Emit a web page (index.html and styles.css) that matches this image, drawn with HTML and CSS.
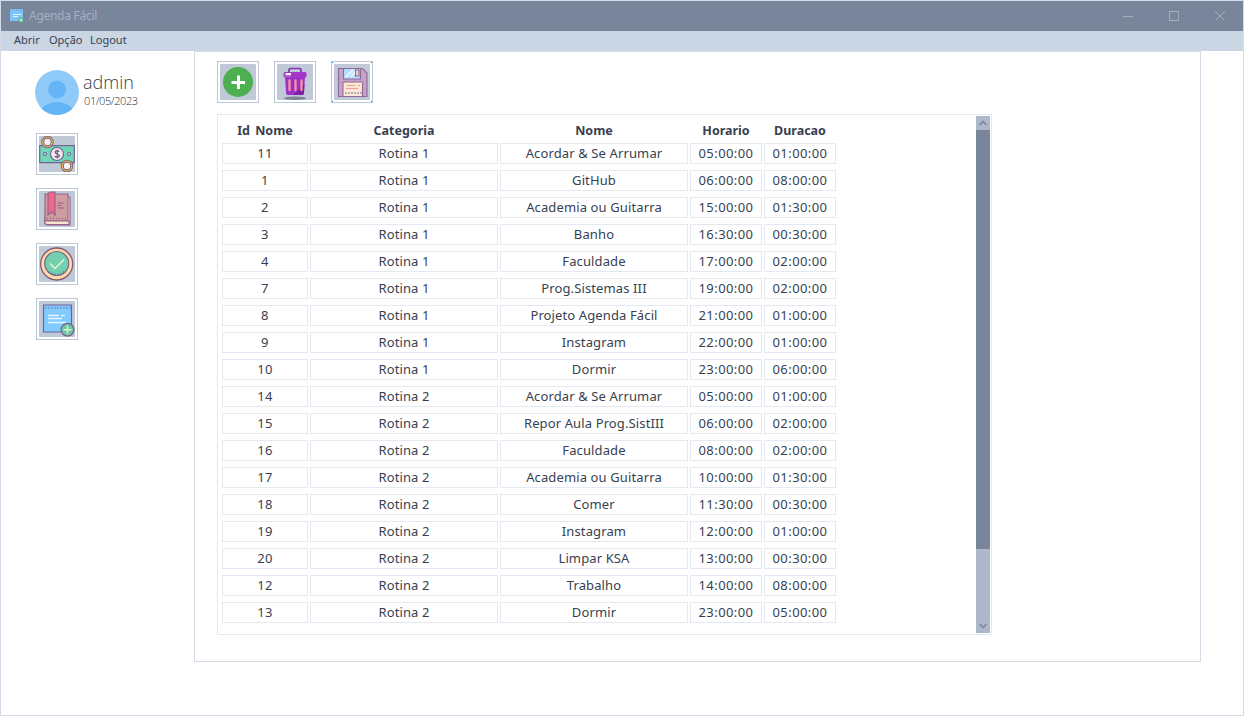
FILE: index.html
```html
<!DOCTYPE html>
<html lang="pt-BR">
<head>
<meta charset="utf-8">
<title>Agenda Fácil</title>
<link rel="stylesheet" href="styles.css">
</head>
<body>
<div class="window">
  <header class="titlebar">
    <svg class="app-icon" width="14" height="14" viewBox="0 0 14 14"><path fill="#7cc4fa" d="M0 0h13v12H0z"/><path stroke="#659fd3" d="M0 1h13" stroke-dasharray="1 1"/><path stroke="#e5f3ff" d="M3 5.5h8M3 7.5h5"/><circle cx="11" cy="11" r="2.8" fill="#5bb79c"/><path stroke="#d9f5e5" d="M9.5 11h3M11 9.500v3"/></svg>
    <span class="title">Agenda Fácil</span>
    <svg class="controls" width="104" height="12" viewBox="0 0 104 12" fill="none" stroke="#a3adc0"><path d="M0 6.500h10M46.500 1.500h9v9h-9z"/><path d="M92.500 1.500l9 9m0-9l-9 9"/></svg>
  </header>
  <nav class="menubar"><span class="m-open">Abrir</span><span class="m-option">Opção</span><span class="m-logout">Logout</span></nav>
  <div class="body">
    <aside class="sidebar">
      <div class="user">
        <svg width="44" height="46" viewBox="0 0 44 46"><defs><clipPath id="face"><ellipse cx="22" cy="22.500" rx="22" ry="22.500"/></clipPath></defs><g clip-path="url(#face)"><path fill="#90caf9" d="M0 0h44v46H0z"/><circle cx="22" cy="19.500" r="9" fill="#64b5f6"/><ellipse cx="22" cy="44" rx="17" ry="12" fill="#64b5f6"/></g></svg>
        <div class="user-text"><div class="name">admin</div><div class="date">01/05/2023</div></div>
      </div>
      <div class="side-buttons">
        <button class="tool"><svg viewBox="0 0 36 36"><g stroke="#6f6494" stroke-width="1.200"><path fill="#70d6b8" d="M.7 9.700h34.600v17H.7z"/><circle cx="18" cy="18" r="6.500" fill="#f7e9eb"/><circle cx="6" cy="18" r="1.500" fill="#d5eef2"/><circle cx="30" cy="18" r="1.500" fill="#d5eef2"/></g><path fill="none" stroke="#67598c" stroke-width="1.200" d="M20.500 15.700c-1-1.300-4.500-1.200-4.500.6 0 2 4.500 1.300 4.500 3.400 0 1.900-3.700 1.900-4.800.5M18.200 13.500v9"/><g fill="#f5f3f9" stroke="#6f5f80" stroke-width="3"><circle cx="8.500" cy="6" r="4.700"/><circle cx="28" cy="30" r="4.700"/></g><g fill="none" stroke="#f0b04c" stroke-width="1.300"><circle cx="8.500" cy="6" r="4.800"/><circle cx="28" cy="30" r="4.800"/></g></svg></button>
        <button class="tool"><svg viewBox="0 0 36 36" stroke="#94608a" stroke-width="1.100"><path fill="#f9e1ce" d="M7 6h24v28H8.500Q5 33 6 28z"/><path fill="#cf9d9f" d="M6 3h23v27H6z"/><path fill="#f9e5cd" d="M6 30h24v3.500H8Q5 33 6 30z"/><path fill="#ef6889" d="M9 2.500l2-1.500h5v23l-3.500-3L9 24z"/><path d="M18.500 12h6M18.500 14.500h4M18.500 17h7"/><path stroke-width="1.600" stroke-dasharray="1 2" d="M8 27.500h20"/></svg></button>
        <button class="tool"><svg viewBox="0 0 36 36"><circle cx="17.700" cy="18" r="16" fill="#fddcaa" stroke="#875777" stroke-width="1.300"/><circle cx="17.700" cy="17.500" r="12" fill="#72cfb0" stroke="#7c668a" stroke-width="1.200"/><path fill="none" stroke="#e9f5d4" stroke-width="1.500" d="M11 17.500l5 5 9-9"/><path fill="none" stroke="#60648b" stroke-width="1.800" stroke-dasharray="1 2" d="M10 26q8 5 15 0"/></svg></button>
        <button class="tool"><svg viewBox="0 0 36 36"><path fill="#80cbff" stroke="#735f99" stroke-width="1.200" d="M4.500 4h28v27h-28z"/><path stroke="#7361a0" stroke-width="1.600" stroke-dasharray="1 2" d="M6.500 7h25"/><path stroke="#e5f4ff" stroke-width="1.500" d="M9 14.500h11m2 0h4M9 17.500h14M9 21.500h18"/><circle cx="28.500" cy="28.800" r="6.400" fill="#70c3a5" stroke="#7a638a" stroke-width="1.300"/><path stroke="#d7f4cf" stroke-width="1.500" d="M24.500 28.800h8M28.500 24.800v8"/></svg></button>
      </div>
    </aside>
    <main class="panel">
      <div class="toolbar">
        <button class="tool"><svg viewBox="0 0 36 36"><circle cx="18" cy="18" r="15" fill="#4caf50"/><path stroke="#fff" stroke-width="3" d="M11.500 18.500h13.500M18.500 11.500v13.500"/></svg></button>
        <button class="tool"><svg viewBox="0 0 36 36"><ellipse cx="18" cy="34.300" rx="11" ry="1.700" fill="#7d8394"/><path fill="none" stroke="#8630af" stroke-width="1.700" d="M12 9V6q0-1.500 2-1.500h8q2 0 2 1.500v3"/><path fill="#9b32c4" d="M8 12h20l-1 17q0 2-2 2H11q-2 0-2-2z"/><path fill="#7d1fa5" d="M27.500 20L27 29q0 2-2 2h-9z"/><rect x="6.500" y="8" width="23" height="5.500" rx="1.500" fill="#a634c8"/><path fill="#ba68d6" d="M7 9h6l1 4H8z"/><path fill="#fff" d="M9 9h5v2H9z"/><path stroke="#ff91a5" stroke-width="2.300" stroke-linecap="round" d="M12.500 16.500v9.500M18.500 16.500v9.500M24.500 16.500v9.500"/></svg></button>
        <button class="tool focused"><svg viewBox="0 0 36 36" stroke="#8f6a99" stroke-width="1.100"><path fill="#c3a3c8" d="M4.500 4.500h24L33 9v23.500H4.500z"/><path fill="#b5dcff" d="M9.500 4.500h17v10.500h-17z"/><path stroke="#e7f3ff" stroke-width="2" d="M12 13l7-7.500M17 13l5-6"/><path fill="#eed2b9" d="M21.500 6h3.500v6h-3.500z"/><path fill="#fae8d5" d="M9 18h19.500v14.500H9z"/><path stroke="#ef9a9a" d="M13 21.500h8m3 0h2M12 24.500h12"/><path stroke-width="2" stroke-dasharray="1 2" d="M11.500 29h16"/></svg></button>
      </div>
      <section class="list">
        <div class="sheet">
          <div class="row head"><span class="id">Id Nome</span><span>Categoria</span><span>Nome</span><span>Horario</span><span>Duracao</span></div>
          <div class="rows">
          <div class="row"><span>11</span><span>Rotina 1</span><span>Acordar &amp; Se Arrumar</span><span>05:00:00</span><span>01:00:00</span></div>
          <div class="row"><span>1</span><span>Rotina 1</span><span>GitHub</span><span>06:00:00</span><span>08:00:00</span></div>
          <div class="row"><span>2</span><span>Rotina 1</span><span>Academia ou Guitarra</span><span>15:00:00</span><span>01:30:00</span></div>
          <div class="row"><span>3</span><span>Rotina 1</span><span>Banho</span><span>16:30:00</span><span>00:30:00</span></div>
          <div class="row"><span>4</span><span>Rotina 1</span><span>Faculdade</span><span>17:00:00</span><span>02:00:00</span></div>
          <div class="row"><span>7</span><span>Rotina 1</span><span>Prog.Sistemas III</span><span>19:00:00</span><span>02:00:00</span></div>
          <div class="row"><span>8</span><span>Rotina 1</span><span>Projeto Agenda Fácil</span><span>21:00:00</span><span>01:00:00</span></div>
          <div class="row"><span>9</span><span>Rotina 1</span><span>Instagram</span><span>22:00:00</span><span>01:00:00</span></div>
          <div class="row"><span>10</span><span>Rotina 1</span><span>Dormir</span><span>23:00:00</span><span>06:00:00</span></div>
          <div class="row"><span>14</span><span>Rotina 2</span><span>Acordar &amp; Se Arrumar</span><span>05:00:00</span><span>01:00:00</span></div>
          <div class="row"><span>15</span><span>Rotina 2</span><span>Repor Aula Prog.SistIII</span><span>06:00:00</span><span>02:00:00</span></div>
          <div class="row"><span>16</span><span>Rotina 2</span><span>Faculdade</span><span>08:00:00</span><span>02:00:00</span></div>
          <div class="row"><span>17</span><span>Rotina 2</span><span>Academia ou Guitarra</span><span>10:00:00</span><span>01:30:00</span></div>
          <div class="row"><span>18</span><span>Rotina 2</span><span>Comer</span><span>11:30:00</span><span>00:30:00</span></div>
          <div class="row"><span>19</span><span>Rotina 2</span><span>Instagram</span><span>12:00:00</span><span>01:00:00</span></div>
          <div class="row"><span>20</span><span>Rotina 2</span><span>Limpar KSA</span><span>13:00:00</span><span>00:30:00</span></div>
          <div class="row"><span>12</span><span>Rotina 2</span><span>Trabalho</span><span>14:00:00</span><span>08:00:00</span></div>
          <div class="row"><span>13</span><span>Rotina 2</span><span>Dormir</span><span>23:00:00</span><span>05:00:00</span></div>
          </div>
        </div>
        <div class="scrollbar">
          <svg width="14" height="14" fill="none" stroke="#75829b" stroke-width="1.300"><path d="M3.500 9l3.500-3.500L10.500 9"/></svg>
          <div class="thumb"></div>
          <svg width="14" height="14" fill="none" stroke="#75829b" stroke-width="1.300"><path d="M3.500 5l3.500 3.500L10.500 5"/></svg>
        </div>
      </section>
    </main>
  </div>
</div>
</body>
</html>
```
FILE: styles.css
```css
* { box-sizing: border-box; }
body { margin: 0; background: #fff; color: #373f51; font-family: "Noto Sans", sans-serif; }
.window { width: 1244px; height: 716px; border: 1px solid #d5dae8; display: flex; flex-direction: column; overflow: hidden; }
.titlebar { height: 30px; flex: none; display: flex; align-items: center; padding: 0 16px 0 9px; background: #79859b; color: #a6b0c3; font-size: 12px; }
.title { margin-left: 5px; letter-spacing: -.28px; line-height: 16px; }
.controls { margin-left: auto; shape-rendering: crispEdges; }
.menubar { height: 20px; flex: none; display: flex; padding-left: 13px; background: #cbd6e4; font-size: 11px; line-height: 17px; }
.m-open { width: 35px; }
.m-option { width: 41px; }
.body { flex: 1; display: flex; }
.sidebar { width: 193px; padding: 19px 0 0 34px; }
.user { display: flex; height: 46px; }
.user-text { margin-left: 4px; font-family: "Open Sans", sans-serif; font-weight: 300; }
.name { font-size: 18px; line-height: 25px; }
.date { font-size: 11px; line-height: 12px; padding-left: 1px; letter-spacing: -.4px; color: #272d3a; }
.side-buttons { display: flex; flex-direction: column; gap: 13px; padding: 17px 0 0 1px; }
.tool { display: block; width: 42px; height: 42px; padding: 2px; border: 1px solid #bdc8d6; background: #fff; }
.tool svg { display: block; width: 36px; height: 36px; background: #c0c9d7; border-radius: 1px; }
.focused {
  background:
    linear-gradient(#278bda, #278bda) 0 0 / 2px 2px no-repeat border-box,
    linear-gradient(#278bda, #278bda) 100% 0 / 2px 2px no-repeat border-box,
    linear-gradient(#278bda, #278bda) 0 100% / 2px 2px no-repeat border-box,
    linear-gradient(#278bda, #278bda) 100% 100% / 2px 2px no-repeat border-box,
    #fff;
}
.panel { width: 1007px; height: 611px; border: 1px solid #d5dce8; padding: 9px 0 0 22px; }
.toolbar { display: flex; gap: 15px; }
.tool svg { margin: 0 auto; }
.list { width: 775px; height: 521px; margin-top: 11px; border: 1px solid #e4e8f0; padding: 1px 1px 1px 4px; display: flex; justify-content: space-between; }
.row { display: grid; grid-template-columns: 86px 188px 188px 72px 72px; column-gap: 2px; }
.row span { height: 21px; border: 1px solid #e4e8f0; text-align: center; font-size: 13px; line-height: 19px; letter-spacing: .42px; white-space: nowrap; }
.rows { display: flex; flex-direction: column; gap: 6px; }
.rows span:nth-child(2), .rows span:nth-child(3) { letter-spacing: .12px; }
.row.head span { height: 27px; border: 0; font-weight: 700; font-size: 12.500px; line-height: 17px; padding-top: 6px; letter-spacing: 0; }
.row.head .id { word-spacing: 2px; }
.scrollbar { width: 14px; height: 517px; background: #afb8cb; display: flex; flex-direction: column; justify-content: space-between; }
.scrollbar svg { display: block; }
.thumb { height: 419px; margin-bottom: auto; background: #79859b; }
```
